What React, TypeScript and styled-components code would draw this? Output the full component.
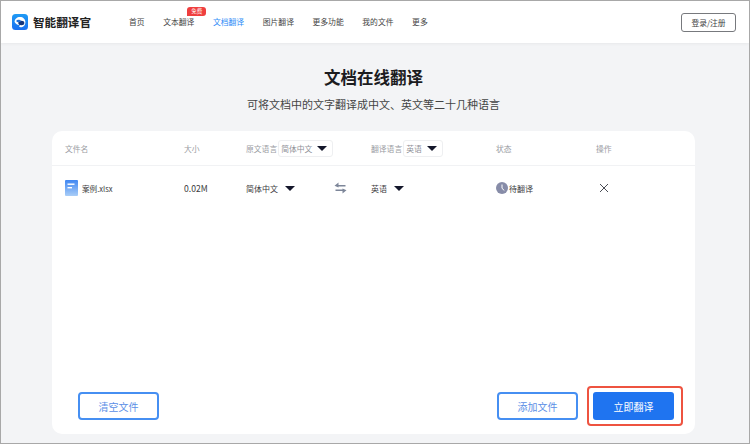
import styled, { createGlobalStyle } from "styled-components";

const GlobalStyle = createGlobalStyle`
  html, body {
    margin: 0;
    padding: 0;
  }
  body {
    font-family: "Noto Sans CJK SC", "Noto Sans", sans-serif;
    color: #333;
  }
  * {
    box-sizing: border-box;
  }
`;

const Frame = styled.div`
  width: 750px;
  height: 444px;
  border: 1px solid #a8a8a8;
  background-color: #f3f4f6;
  display: flex;
  flex-direction: column;
  overflow: hidden;
`;

const Header = styled.header`
  height: 42px;
  flex-shrink: 0;
  background-color: #fff;
  box-shadow: 0 1px 3px rgba(0, 0, 0, 0.05);
  display: flex;
  align-items: center;
  padding: 0 13px 0 11px;
`;

const Brand = styled.div`
  display: flex;
  align-items: center;
  gap: 5px;
  width: 117px;
  flex-shrink: 0;
  font-size: 11.6px;
  font-weight: 700;
  color: #222;
`;

const Nav = styled.nav`
  display: flex;
  align-items: center;
  gap: 18.6px;
  flex: 1;
`;

const NavItem = styled.a<{ $active?: boolean }>`
  position: relative;
  font-size: 7.8px;
  line-height: 12px;
  color: ${(p) => (p.$active ? "#2b8cf7" : "#444")};
`;

const Badge = styled.span`
  position: absolute;
  top: -9px;
  left: 24px;
  width: 19px;
  height: 9px;
  border-radius: 3px 3px 3px 0;
  background-color: #ef3f3f;
  color: #fff;
  font-size: 5.5px;
  line-height: 9px;
  text-align: center;
  white-space: nowrap;
`;

const LoginButton = styled.button`
  width: 55px;
  height: 19px;
  padding: 0;
  border: 1px solid #77797d;
  border-radius: 3px;
  background-color: #fff;
  color: #444;
  font-family: inherit;
  font-size: 7.8px;
`;

const Main = styled.main`
  flex: 1;
  display: flex;
  flex-direction: column;
  align-items: center;
  padding: 0 54px 9px 51px;
  min-height: 0;
`;

const Title = styled.h1`
  margin: 22px 0 0;
  font-size: 16.5px;
  line-height: 24px;
  font-weight: 700;
  color: #1c1c1f;
`;

const Subtitle = styled.p`
  margin: 7px 0 0;
  font-size: 11px;
  line-height: 16px;
  color: #444;
`;

const Card = styled.section`
  margin-top: 19px;
  width: 100%;
  flex: 1;
  background-color: #fff;
  border-radius: 10px;
  display: flex;
  flex-direction: column;
`;

const Row = styled.div`
  display: grid;
  grid-template-columns: 119px 62px 125px 125px 100px 1fr;
  align-items: center;
  padding-left: 13px;
`;

const HeadRow = styled(Row)`
  height: 35px;
  border-bottom: 1px solid #f1f2f4;
`;

const BodyRow = styled(Row)`
  height: 44px;
`;

const HeadCell = styled.div`
  display: flex;
  align-items: center;
  font-size: 7.8px;
  color: #9a9ca3;
  white-space: nowrap;
`;

const MiniSelect = styled.div<{ $width: number }>`
  width: ${(p) => p.$width}px;
  height: 17px;
  margin-left: 1px;
  padding: 0 5px 0 2px;
  border: 1px solid #eeeff1;
  border-radius: 3px;
  display: flex;
  align-items: center;
  justify-content: space-between;
  color: #8f9198;
`;

const Caret = styled.span`
  width: 0;
  height: 0;
  border-left: 5px solid transparent;
  border-right: 5px solid transparent;
  border-top: 5px solid #14172b;
`;

const Cell = styled.div`
  display: flex;
  align-items: center;
  font-size: 8px;
  color: #3c3c40;
  white-space: nowrap;
`;

const FileCell = styled(Cell)`
  gap: 4px;
  font-size: 7.6px;
`;

const SizeCell = styled(Cell)`
  font-size: 8.6px;
`;

const LangCell = styled(Cell)`
  gap: 7px;
`;

const SwapSlot = styled.span`
  margin-left: 32px;
  display: flex;
`;

const StatusCell = styled(Cell)`
  gap: 1px;
`;

const CloseCell = styled(Cell)`
  padding-left: 3px;
`;

const Footer = styled.div`
  margin-top: auto;
  padding: 0 12px 8px 26px;
  display: flex;
  align-items: center;
  justify-content: space-between;
`;

const Actions = styled.div`
  display: flex;
  align-items: center;
  gap: 9px;
`;

const OutlineButton = styled.button`
  width: 81px;
  height: 28px;
  padding: 0;
  border: 2px solid #468ff2;
  border-radius: 4px;
  background-color: #fff;
  color: #5b8fe6;
  font-family: inherit;
  font-size: 10px;
`;

const Highlight = styled.div`
  padding: 4px 7px 4px 4px;
  border: 2px solid #ee5340;
  border-radius: 4px;
`;

const PrimaryButton = styled.button`
  display: block;
  width: 81px;
  height: 28px;
  padding: 0;
  border: none;
  border-radius: 3px;
  background-color: #1f74f0;
  color: #fff;
  font-family: inherit;
  font-size: 10px;
`;

const Logo = () => (
  <svg width="16" height="16" viewBox="0 0 16 16">
    <defs>
      <linearGradient id="logoBg" x1="0" y1="0" x2="0" y2="1">
        <stop offset="0" stopColor="#1f9bf5" />
        <stop offset="1" stopColor="#1a6ff0" />
      </linearGradient>
    </defs>
    <rect width="16" height="16" rx="3.500" fill="url(#logoBg)" />
    <path d="M2.600 8C2.600 5 5 3 8 3s5.400 2 5.400 5.200c0 3-2.200 5-4.800 5l-1.600-.4 1-1.600C6 11 4 10.500 2.600 8z" fill="#fff" />
    <ellipse cx="9.300" cy="9" rx="3" ry="2.200" fill="#17357a" />
    <ellipse cx="6.600" cy="7" rx="2.300" ry="1.300" fill="#1d6fd8" />
  </svg>
);

const DocIcon = () => (
  <svg width="13" height="16" viewBox="0 0 13 16">
    <defs>
      <linearGradient id="docBg" x1="0" y1="0" x2="0" y2="1">
        <stop offset="0" stopColor="#3f86f2" />
        <stop offset="1" stopColor="#a9cdf7" />
      </linearGradient>
    </defs>
    <path d="M1 0h11a1 1 0 0 1 1 1v14a1 1 0 0 1-1 1H1a1 1 0 0 1-1-1V1a1 1 0 0 1 1-1z" fill="url(#docBg)" />
    <rect x="2.500" y="3.500" width="7" height="1.400" fill="#fff" />
    <rect x="2.500" y="7" width="4.500" height="1.400" fill="#fff" />
  </svg>
);

const SwapIcon = () => (
  <svg width="13" height="12" viewBox="0 0 13 12" fill="#7d8699">
    <path d="M4.500 0.500 0.500 3.800 4.500 5.500V4.400H11.500V3H4.500z" />
    <path d="M8.500 11.500 12.500 8.200 8.500 6.500V7.600H1.500V9H8.500z" />
  </svg>
);

const ClockIcon = () => (
  <svg width="12" height="12" viewBox="0 0 12 12">
    <circle cx="6" cy="6" r="6" fill="#878ca8" />
    <path d="M6 2.500V6.300L8.300 8.500" fill="none" stroke="#fff" strokeWidth="1" />
  </svg>
);

const CloseIcon = () => (
  <svg width="10" height="10" viewBox="0 0 10 10" stroke="#4a4d55" strokeWidth="1">
    <path d="M1 1l8 8M9 1l-8 8" />
  </svg>
);

const navItems = ["首页", "文本翻译", "文档翻译", "图片翻译", "更多功能", "我的文件", "更多"];

export default function App() {
  return (
    <>
      <GlobalStyle />
      <Frame>
        <Header>
          <Brand>
            <Logo />
            智能翻译官
          </Brand>
          <Nav>
            {navItems.map((item) => (
              <NavItem key={item} $active={item === "文档翻译"}>
                {item}
                {item === "文本翻译" && <Badge>免费</Badge>}
              </NavItem>
            ))}
          </Nav>
          <LoginButton>登录/注册</LoginButton>
        </Header>
        <Main>
          <Title>文档在线翻译</Title>
          <Subtitle>可将文档中的文字翻译成中文、英文等二十几种语言</Subtitle>
          <Card>
            <HeadRow>
              <HeadCell>文件名</HeadCell>
              <HeadCell>大小</HeadCell>
              <HeadCell>
                原文语言
                <MiniSelect $width={55}>
                  简体中文
                  <Caret />
                </MiniSelect>
              </HeadCell>
              <HeadCell>
                翻译语言
                <MiniSelect $width={40}>
                  英语
                  <Caret />
                </MiniSelect>
              </HeadCell>
              <HeadCell>状态</HeadCell>
              <HeadCell>操作</HeadCell>
            </HeadRow>
            <BodyRow>
              <FileCell>
                <DocIcon />
                案例.xlsx
              </FileCell>
              <SizeCell>0.02M</SizeCell>
              <LangCell>
                简体中文
                <Caret />
                <SwapSlot>
                  <SwapIcon />
                </SwapSlot>
              </LangCell>
              <LangCell>
                英语
                <Caret />
              </LangCell>
              <StatusCell>
                <ClockIcon />
                待翻译
              </StatusCell>
              <CloseCell>
                <CloseIcon />
              </CloseCell>
            </BodyRow>
            <Footer>
              <OutlineButton>清空文件</OutlineButton>
              <Actions>
                <OutlineButton>添加文件</OutlineButton>
                <Highlight>
                  <PrimaryButton>立即翻译</PrimaryButton>
                </Highlight>
              </Actions>
            </Footer>
          </Card>
        </Main>
      </Frame>
    </>
  );
}
